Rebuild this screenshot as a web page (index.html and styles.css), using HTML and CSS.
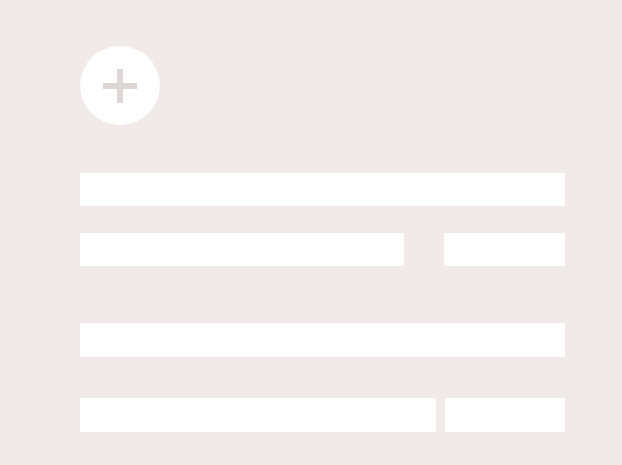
FILE: index.html
```html
<!DOCTYPE html>
<html>
<head>
<meta charset="utf-8">
<link rel="stylesheet" href="styles.css">
</head>
<body>
<div class="page">
  <div class="add-btn">
    <svg width="34" height="34" viewBox="0 0 34 34"><rect x="0" y="14" width="34" height="6" fill="#dcd7d5"/><rect x="14" y="0" width="6" height="34" fill="#dcd7d5"/></svg>
  </div>
  <div class="bar bar1"></div>
  <div class="row row2">
    <div class="bar main"></div>
    <div class="bar side"></div>
  </div>
  <div class="bar bar3"></div>
  <div class="row row4">
    <div class="bar main"></div>
    <div class="bar side"></div>
  </div>
</div>
</body>
</html>
```
FILE: styles.css
```css
html, body {
  margin: 0;
  padding: 0;
  background: #f0ebe9;
  font-family: "Liberation Sans", Arial, sans-serif;
}
.page {
  width: 622px;
  height: 465px;
  box-sizing: border-box;
  padding: 46px 0 0 80px;
  display: flex;
  flex-direction: column;
  overflow: hidden;
}
.add-btn {
  width: 80px;
  height: 79px;
  border-radius: 50%;
  background: #fefefe;
  display: flex;
  align-items: center;
  justify-content: center;
}
.bar {
  background: #fefefe;
}
.bar1 {
  width: 485px;
  height: 33px;
  margin-top: 48px;
}
.row {
  display: flex;
  width: 485px;
}
.row2 {
  margin-top: 27px;
  height: 33px;
  gap: 40px;
}
.row2 .main { width: 324px; }
.row2 .side { width: 121px; }
.bar3 {
  width: 485px;
  height: 34px;
  margin-top: 57px;
}
.row4 {
  margin-top: 41px;
  height: 34px;
  gap: 9px;
}
.row4 .main { width: 356px; }
.row4 .side { width: 120px; }
```
